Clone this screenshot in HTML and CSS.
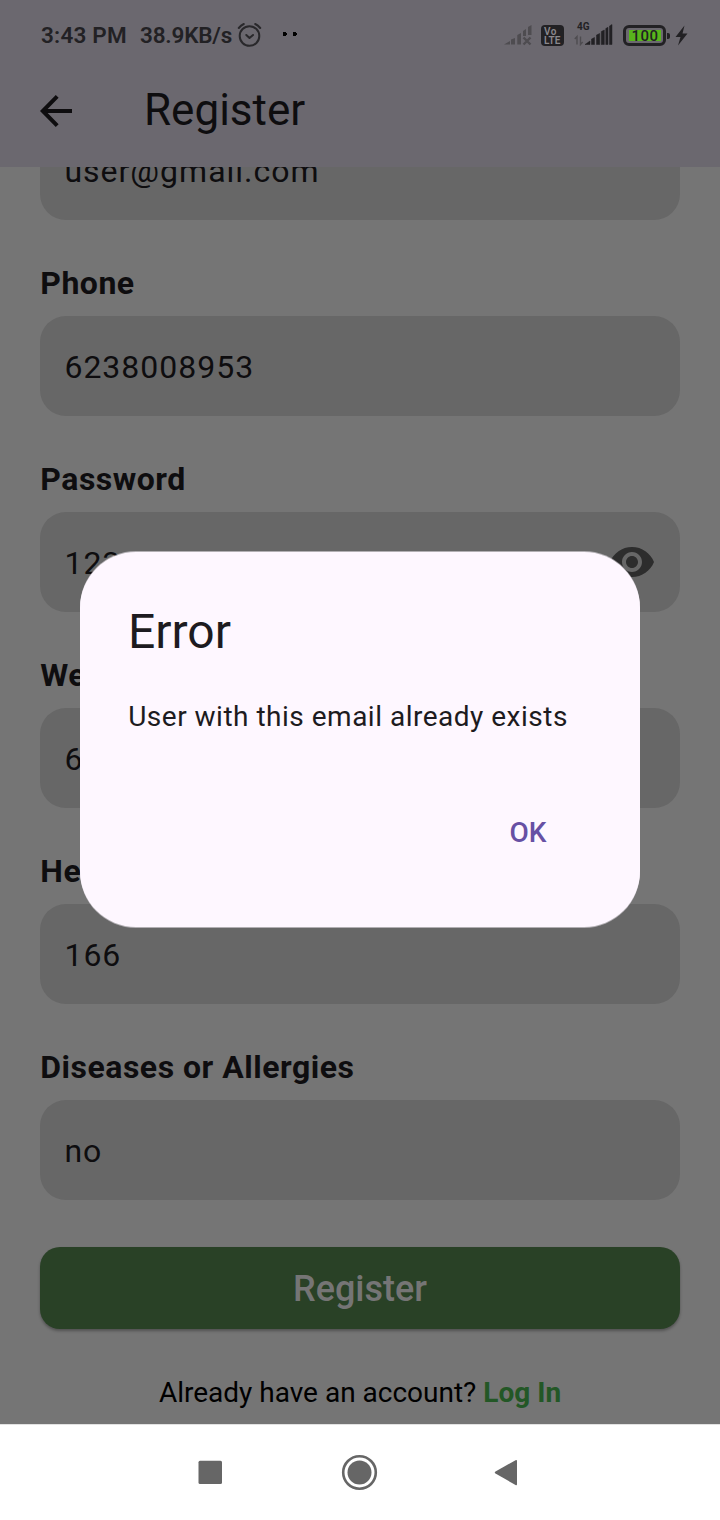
FILE: index.html
```html
<!DOCTYPE html>
<html lang="en">
<head>
<meta charset="utf-8">
<title>Register</title>
<link rel="stylesheet" href="styles.css">
</head>
<body>
<div class="screen">
  <header class="appbar">
    <div class="status">
      <span class="clock">3:43 PM</span>
      <span class="speed">38.9KB/s</span>
      <svg class="alarm" width="26" height="26" viewBox="0 0 26 26" fill="none" stroke="#29282b" stroke-width="2" stroke-linecap="round" stroke-linejoin="round"><circle cx="12.500" cy="14" r="9.800"/><path d="M9.300 13l3.200 3 3.500-3M1.800 6Q4 3.300 6.800 2M23.200 6Q21 3.300 18.200 2"/></svg>
      <svg class="dots" width="16" height="6" viewBox="0 0 16 6"><path d="M1 1h3v1h1v2H4v1H1zM11 1h3v1h1v2h-1v1h-3z" fill="#000"/></svg>
      <svg class="sim" width="28" height="22" viewBox="0 0 28 22" fill="#4e4c50"><path d="M0 20.500L6 17v3.500zM7 15.500l4-1.500v6.500H7zM13.300 11l3.700-2v11.500h-3.700zM19 7l3-2v7h-3zM24 3l3.500-2v10H24z"/><path d="M19.500 13.500l7 7M26.500 13.500l-7 7" stroke="#4e4c50" stroke-width="2.400"/></svg>
      <span class="volte"><span class="vo">Vo</span><span>LTE</span></span>
      <span class="cell"><span class="gen">4G</span>
        <svg width="39" height="22" viewBox="0 0 39 22"><path d="M3 20.500v-8L.8 15M6.500 12.500v8L8.700 18" fill="none" stroke="#4e4c50" stroke-width="1.400"/><path d="M11 20.500L16 17v3.500zM17.500 15l3-1.500v7h-3zM22.500 11l3.200-1.500v11h-3.200zM27.300 7.500L30.300 6v14.500h-3zM31.800 4.500L34 3.300v17.200h-2.200zM35.500 2L38 .5v20h-2.500z" fill="#222124" stroke="#222124" stroke-width=".5"/></svg>
      </span>
      <span class="battery"><span class="charge">100</span></span>
      <svg class="bolt" width="13" height="21" viewBox="0 0 13 21"><path d="M9.500.500L.500 12h5L3 20.500 12.500 8.500h-5z" fill="#222124"/></svg>
    </div>
    <div class="toolbar">
      <svg width="32" height="32" viewBox="0 0 32 32" fill="none" stroke="#0e0d0f" stroke-width="4"><path d="M32 16H3M17.200 1.400L2.800 16l14.400 14.600"/></svg>
      <h1 class="title">Register</h1>
    </div>
  </header>

  <main class="page">
    <form class="form">
      <div class="field">user@gmail.com</div>
      <label class="label">Phone</label>
      <div class="field">6238008953</div>
      <label class="label">Password</label>
      <div class="field">123
        <svg class="eye" width="44" height="30" viewBox="1 4.500 22 15" fill="#2d2d2d"><path d="M12 4.500C7 4.500 2.730 7.610 1 12c1.730 4.390 6 7.500 11 7.500s9.270-3.110 11-7.500c-1.730-4.390-6-7.500-11-7.500zM12 17c-2.760 0-5-2.240-5-5s2.240-5 5-5 5 2.240 5 5-2.240 5-5 5zm0-8c-1.660 0-3 1.340-3 3s1.340 3 3 3 3-1.340 3-3-1.340-3-3-3z"/></svg>
      </div>
      <label class="label">Weight</label>
      <div class="field">6</div>
      <label class="label">Height</label>
      <div class="field">166</div>
      <label class="label">Diseases or Allergies</label>
      <div class="field">no</div>
      <button class="submit" type="button">Register</button>
      <p class="signin">Already have an account? <a class="login">Log In</a></p>
    </form>
  </main>

  <nav class="nav">
    <svg width="720" height="95" viewBox="0 1 720 95" fill="#666"><rect x="198.500" y="36.700" width="23.500" height="23.300" rx="1.500"/><circle cx="359.500" cy="48.500" r="12"/><circle cx="359.500" cy="48.500" r="16.300" fill="none" stroke="#666" stroke-width="2.600"/><path d="M515.500 36.200Q517 35.500 517 37v23.200q0 1.500-1.500.800L495.500 49.500q-1.500-1 0-2z"/></svg>
  </nav>

  <section class="dialog" role="alertdialog">
    <h2 class="heading">Error</h2>
    <p class="message">User with this email already exists</p>
    <button class="ok" type="button">OK</button>
  </section>
</div>
</body>
</html>
```
FILE: styles.css
```css
* { box-sizing: border-box; }
body { margin: 0; font-family: Roboto, "Liberation Sans", sans-serif; }
h1, h2, p { margin: 0; font-weight: 400; }
button { border: 0; font-family: inherit; }

.screen { position: relative; display: flex; flex-direction: column; width: 720px; height: 1520px; overflow: hidden; background: #757575; }

.appbar { flex: none; height: 167px; background: #6b686f; }
.status { display: flex; align-items: center; height: 70px; padding-left: 41px; color: #222124; white-space: nowrap; }
.clock, .speed { font-size: 22.5px; font-weight: 600; line-height: 28px; }
.clock { width: 99px; letter-spacing: 0.2px; }
.speed { width: 96px; letter-spacing: -0.2px; }
.alarm { margin-left: 1px; }
.dots { margin: 0 0 2px 19px; }
.sim { margin-left: 206px; }
.volte { display: flex; flex-direction: column; width: 23px; height: 21px; margin-left: 9px; padding: 2px 0 0 3px; border-radius: 4px; background: #222124; color: #8a888d; font-size: 10px; font-weight: 600; line-height: 9px; letter-spacing: 0.2px; }
.vo { letter-spacing: 0.6px; }
.cell { position: relative; display: flex; margin-left: 10px; }
.gen { position: absolute; left: 3px; top: -2px; font-size: 10px; font-weight: 700; line-height: 10px; }
.battery { position: relative; width: 43px; height: 21px; margin-left: 10px; padding: 2px; border: 3px solid #222124; border-radius: 6px; }
.battery::after { content: ""; position: absolute; left: 41px; top: 5px; width: 3px; height: 6px; border-radius: 0 2px 2px 0; background: #222124; }
.charge { display: block; width: 32px; height: 11px; margin-left: 1px; background: #58b51c; font-size: 15px; font-weight: 500; line-height: 12px; letter-spacing: 0.4px; text-align: center; }
.bolt { margin-left: 9px; }

.toolbar { display: flex; align-items: center; height: 82px; padding-left: 40px; color: #0e0d0f; }
.title { margin: -3px 0 0 72px; font-size: 44px; line-height: 56px; }

.page { flex: none; height: 1257px; overflow: hidden; }
.form { display: flex; flex-direction: column; margin-top: -47px; padding: 0 40px; }
.field { display: flex; flex: none; align-items: center; justify-content: space-between; height: 100px; padding: 2px 26px 0 24.4px; border-radius: 26px; background: #676767; color: #0e0d0f; font-size: 32px; letter-spacing: 1px; }
.eye { margin-top: -2px; }
.label { height: 96px; padding: 44px 0 0 0.3px; color: #0e0d0f; font-size: 32px; font-weight: 700; line-height: 38px; letter-spacing: 0.5px; }
.submit { height: 82px; margin-top: 47px; padding-top: 3px; border-radius: 20px; background: #294126; box-shadow: 0 2px 3px rgba(0, 0, 0, 0.3); color: #757575; font-size: 36px; font-weight: 500; }
.signin { margin-top: 47px; color: #000; font-size: 28px; line-height: 34px; text-align: center; }
.login { color: #235726; font-weight: 700; }

.nav { flex: none; height: 96px; border-top: 1px solid #e2e2e2; background: #fff; }
.nav svg { display: block; }

.dialog { position: absolute; left: 80px; top: 552px; width: 560px; height: 375px; padding: 48px 48px 0; border-radius: 56px; background: #fef7ff; box-shadow: 0 -1px 0 rgba(254, 247, 255, 0.5), 0 1px 0 rgba(254, 247, 255, 0.5); color: #1d1b20; display: flex; flex-direction: column; }
.heading { font-size: 48px; line-height: 64px; }
.message { margin-top: 32.5px; padding-left: 0.2px; font-size: 28px; line-height: 40px; letter-spacing: 0.5px; white-space: nowrap; }
.ok { align-self: flex-end; width: 128px; height: 80px; margin: 55.5px 0 0; background: none; color: #6750a4; font-size: 28px; font-weight: 500; }
```
